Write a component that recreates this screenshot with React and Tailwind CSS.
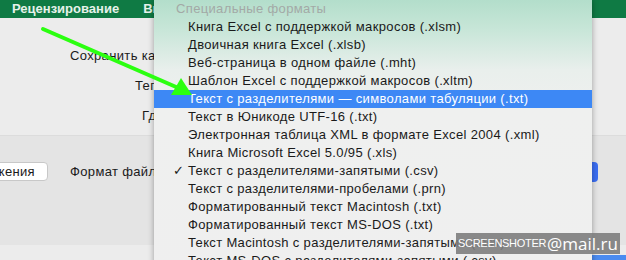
import React from "react";

const items = [
  "Книга Excel с поддержкой макросов (.xlsm)",
  "Двоичная книга Excel (.xlsb)",
  "Веб-страница в одном файле (.mht)",
  "Шаблон Excel с поддержкой макросов (.xltm)",
  "Текст с разделителями — символами табуляции (.txt)",
  "Текст в Юникоде UTF-16 (.txt)",
  "Электронная таблица XML в формате Excel 2004 (.xml)",
  "Книга Microsoft Excel 5.0/95 (.xls)",
  "Текст с разделителями-запятыми (.csv)",
  "Текст с разделителями-пробелами (.prn)",
  "Форматированный текст Macintosh (.txt)",
  "Форматированный текст MS-DOS (.txt)",
  "Текст Macintosh с разделителями-запятыми (.csv)",
  "Текст MS-DOS с разделителями-запятыми (.csv)",
];

const Arrow = () => (
  <svg className="absolute left-0 top-0" width="626" height="260" viewBox="0 0 626 260">
    <line x1="43" y1="29" x2="183" y2="90" stroke="#2bff10" strokeWidth="4" strokeLinecap="round" />
    <polygon points="192,95 171,95 181,78" fill="#2bff10" />
  </svg>
);

const App = () => {
  return (
    <div className="relative w-[626px] h-[260px] overflow-hidden bg-[#ececec] text-[13px] tracking-[0.35px] text-[#1a1a1a] font-['Liberation_Sans',Arial,sans-serif]">
      {/* window behind the menu */}
      <div className="flex flex-col h-full">
        <div className="h-[18px] bg-[#0f7a44] flex items-center gap-[24px] pl-[12px] text-[#e6f2ea] font-bold tracking-normal">
          <span>Рецензирование</span>
          <span>Вид</span>
        </div>
        <div className="h-[117px] relative">
          <p className="absolute left-[70px] top-[28px]">Сохранить как:</p>
          <p className="absolute left-[135px] top-[58px]">Теги:</p>
          <p className="absolute left-[142px] top-[88px]">Где:</p>
        </div>
        <div className="h-[110px] bg-[#e4e4e4] border-t border-[#dcdcdc] flex items-start pt-[26px] gap-[22px]">
          <div className="ml-[-60px] w-[108px] h-[19px] bg-white rounded-[4px] border border-[#c8c8c8] flex items-center justify-end pr-[12px]">
            кения
          </div>
          <p className="leading-[19px]">Формат файла:</p>
          <div className="ml-auto mr-[28px] w-[12px] h-[20px] rounded-[4px] bg-[#3b6ef2]" />
        </div>
        <div className="flex-1 flex items-end">
          <div className="ml-auto w-[36px] h-[5px] bg-[#4a8bf0]" />
        </div>
      </div>

      {/* popup menu */}
      <div className="absolute left-[154px] top-0 w-[438px] h-[280px] shadow-[0_0_6px_rgba(0,0,0,0.35)] bg-[linear-gradient(to_bottom,#b3decb_0px,#c8e6d8_30px,#e9efec_70px,#eff0ef_110px,#efefef_100%)] flex flex-col">
        <div className="h-[18px] flex items-center pl-[22px] text-[#a3a9a6]">Специальные форматы</div>
        {items.map((t, i) => {
          const hi = i === 4;
          const checked = i === 8;
          return (
            <div
              key={i}
              className={`h-[18px] shrink-0 flex items-center pl-[34px] relative ${hi ? "bg-[#3d88f5] text-white" : ""}`}
            >
              {checked && <span className="absolute left-[19px] top-0 h-[18px] flex items-center">✓</span>}
              {t}
            </div>
          );
        })}
      </div>

      <Arrow />

      {/* watermark */}
      <div className="absolute left-[456px] top-[233px] w-[164px] h-[21px] bg-[#7d7d7d]/90 flex items-center justify-center gap-[1px] text-white tracking-normal">
        <span className="text-[11px] tracking-[-0.3px] font-['Liberation_Sans_Narrow','Liberation_Sans',sans-serif]">SCREENSHOTER</span>
        <span className="text-[17px] leading-none font-['Open_Sans',sans-serif]">@mail.ru</span>
      </div>
    </div>
  );
};

export default App;
